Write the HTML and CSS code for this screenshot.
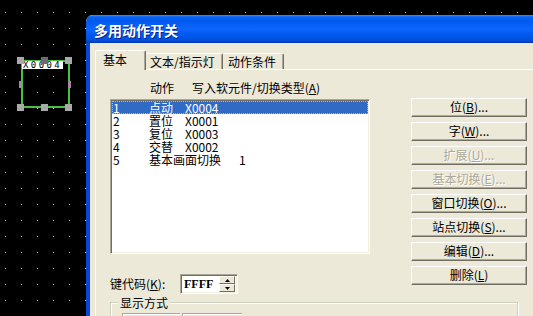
FILE: index.html
```html
<!DOCTYPE html>
<html lang="zh-CN">
<head>
  <meta charset="UTF-8" />
  <title>多用动作开关</title>
  <link rel="stylesheet" href="styles.css">
</head>
<body>
  <div class="desk">
    <!-- Editor grid -->
    <svg class="grid" width="533" height="316">
      <defs>
        <pattern id="dots" x="5" y="12" width="16" height="16" patternUnits="userSpaceOnUse">
          <rect width="1" height="1" fill="#d8d8d8" />
        </pattern>
      </defs>
      <rect width="533" height="316" fill="url(#dots)" />
    </svg>

    <!-- Selected switch on the screen -->
    <div class="part">
      <div class="part-frame">
        <span class="part-label">X0004</span>
      </div>
      <span class="handle h-tl"></span>
      <span class="handle h-tm"></span>
      <span class="handle h-tr"></span>
      <span class="handle h-ml"></span>
      <span class="handle h-mr"></span>
      <span class="handle h-bl"></span>
      <span class="handle h-bm"></span>
      <span class="handle h-br"></span>
    </div>

    <!-- Dialog window -->
    <div class="dialog">
      <div class="titlebar">多用动作开关</div>
      <div class="dlg-body">
        <div class="tabs">
          <div class="tab tab-basic active">基本</div>
          <div class="tab tab-text">文本/指示灯</div>
          <div class="tab tab-cond">动作条件</div>
        </div>

        <div class="panel">
          <div class="main-row">
            <div class="left-col">
              <div class="list-head">
                <span class="head-action">动作</span>
                <span>写入软元件/切换类型(<u>A</u>)</span>
              </div>

              <div class="listbox">
                <div class="row selected"><span class="num">1</span><span>点动</span><span class="val">X0004</span></div>
                <div class="row"><span class="num">2</span><span>置位</span><span class="val">X0001</span></div>
                <div class="row"><span class="num">3</span><span>复位</span><span class="val">X0003</span></div>
                <div class="row"><span class="num">4</span><span>交替</span><span class="val">X0002</span></div>
                <div class="row"><span class="num">5</span><span>基本画面切换</span><span class="val wide">1</span></div>
              </div>

              <div class="keycode">
                <span class="keycode-label">键代码(<u>K</u>):</span>
                <div class="spin-input">
                  <span class="spin-text">FFFF</span>
                  <div class="spin-btns">
                    <span class="spin-btn"><svg width="5" height="3"><path d="M2.5 0 L5 3 L0 3 Z" fill="#000"/></svg></span>
                    <span class="spin-btn"><svg width="5" height="3"><path d="M0 0 L5 0 L2.5 3 Z" fill="#000"/></svg></span>
                  </div>
                </div>
              </div>
            </div>

            <div class="buttons">
              <div class="btn">位(<u>B</u>)...</div>
              <div class="btn">字(<u>W</u>)...</div>
              <div class="btn disabled">扩展(<u>U</u>)...</div>
              <div class="btn disabled">基本切换(<u>E</u>)...</div>
              <div class="btn">窗口切换(<u>O</u>)...</div>
              <div class="btn">站点切换(<u>S</u>)...</div>
              <div class="btn">编辑(<u>D</u>)...</div>
              <div class="btn">删除(<u>L</u>)</div>
            </div>
          </div>

          <div class="group">
            <span class="group-title">显示方式</span>
            <div class="group-row">
              <span class="group-box"></span>
              <span class="group-box second"></span>
            </div>
          </div>
        </div>
      </div>
    </div>
  </div>
</body>
</html>
```

FILE: styles.css
```css
body {
  margin: 0;
  background: #000;
  font-family: "Noto Sans CJK SC", "Noto Sans", sans-serif;
  font-size: 12px;
  color: #000;
}
u {
  text-decoration: underline;
  text-underline-offset: 1px;
}
.desk {
  position: relative;
  width: 533px;
  height: 316px;
  overflow: hidden;
  background: #000;
}
.grid {
  position: absolute;
  left: 0;
  top: 0;
}

/* Selected part on the canvas */
.part {
  position: absolute;
  left: 17px;
  top: 57px;
  width: 56px;
  height: 55px;
}
.part-frame {
  margin: 3px 0 0 4px;
  width: 45px;
  height: 44px;
  border: 2px solid #46c046;
}
.part-label {
  display: block;
  width: 40px;
  height: 8px;
  margin: -1px 0 0 -1px;
  background: #fff;
  font-family: "DejaVu Sans Mono", monospace;
  font-size: 9px;
  line-height: 8px;
  letter-spacing: 2.4px;
  color: #000;
  padding-left: 1px;
}
.handle {
  position: absolute;
  width: 7px;
  height: 7px;
  background: #a9a9a9;
}
.h-tl { left: 0; top: 0; }
.h-tm { left: 24px; top: 0; background: #6b6b6b; }
.h-tr { left: 48px; top: 0; }
.h-ml { left: 2px; top: 24px; width: 3px; background: #b080b0; }
.h-mr { left: 51px; top: 24px; width: 3px; background: #b080b0; }
.h-bl { left: 0; top: 47px; }
.h-bm { left: 24px; top: 47px; }
.h-br { left: 48px; top: 47px; }

/* Dialog window */
.dialog {
  position: absolute;
  left: 86px;
  top: 15px;
  width: 470px;
  height: 320px;
  background: #ece9d8;
  border-radius: 7px 7px 0 0;
  overflow: hidden;
}
.titlebar {
  height: 28px;
  padding-left: 8px;
  line-height: 30px;
  font-size: 14px;
  font-weight: bold;
  color: #fff;
  text-shadow: 1px 1px 0 #0a1e8c;
  background: linear-gradient(#3b8cff 0, #0a63f2 2px, #0058ee 6px, #0d66ff 14px, #0058ec 20px, #0050e0 25px, #0040c0 27px, #0033a8 28px);
}
.dlg-body {
  height: 292px;
  border-left: 4px solid #0846d8;
  padding: 7px 0 0 5px;
}

/* Tabs */
.tabs {
  display: flex;
  align-items: flex-end;
  height: 19px;
  position: relative;
  z-index: 1;
}
.tab {
  box-sizing: border-box;
  height: 16px;
  line-height: 15px;
  border-top: 1px solid #fff;
  border-left: 1px solid #fff;
  border-right: 1px solid #716f64;
  box-shadow: inset -1px 0 0 #aca899;
  border-radius: 2px 2px 0 0;
  background: #ece9d8;
  white-space: nowrap;
}
.tab.active {
  height: 20px;
  margin-bottom: -1px;
  line-height: 17px;
}
.tab-basic { width: 51px; padding-left: 7px; }
.tab-text { width: 77px; padding-left: 4px; border-left: none; }
.tab-cond { width: 61px; padding-left: 5px; border-left: none; }

.panel {
  height: 260px;
  border-top: 1px solid #fff;
  border-left: 1px solid #fff;
  padding: 11px 0 0 14px;
}
.main-row {
  display: flex;
  gap: 41px;
}
.left-col {
  width: 260px;
}
.list-head {
  line-height: 14px;
  padding-left: 40px;
  display: flex;
  gap: 18px;
}

/* List of actions */
.listbox {
  box-sizing: border-box;
  margin-top: 4px;
  height: 155px;
  background: #fff;
  border-top: 1px solid #aca899;
  border-left: 1px solid #aca899;
  border-right: 1px solid #fff;
  border-bottom: 1px solid #fff;
  box-shadow: inset 1px 1px 0 #716f64, inset -1px -1px 0 #f1efe2;
  padding: 1px 1px 0 1px;
}
.row {
  height: 13px;
  line-height: 13px;
  display: flex;
  white-space: nowrap;
}
.row .num {
  width: 36px;
  padding-left: 1px;
}
.row .val {
  margin-left: 12px;
}
.row .val.wide {
  margin-left: 18px;
}
.row.selected {
  background: #316ac5;
  color: #fff;
  outline: 1px dotted #a9b8d8;
  outline-offset: -1px;
}

/* Key code */
.keycode {
  margin-top: 20px;
  display: flex;
  align-items: center;
}
.keycode-label {
  width: 70px;
  line-height: 14px;
}
.spin-input {
  box-sizing: border-box;
  width: 58px;
  height: 20px;
  background: #fff;
  border-top: 1px solid #aca899;
  border-left: 1px solid #aca899;
  border-right: 1px solid #fff;
  border-bottom: 1px solid #fff;
  box-shadow: inset 1px 1px 0 #716f64, inset -1px -1px 0 #f1efe2;
  display: flex;
  align-items: center;
  justify-content: space-between;
  padding: 0 2px 0 3px;
}
.spin-text {
  font-family: "Liberation Serif", serif;
  font-weight: bold;
  font-size: 12px;
  line-height: 14px;
}
.spin-btns {
  display: flex;
  flex-direction: column;
}
.spin-btn {
  box-sizing: border-box;
  width: 16px;
  height: 8px;
  background: #ece9d8;
  border-top: 1px solid #fff;
  border-left: 1px solid #fff;
  border-right: 1px solid #716f64;
  border-bottom: 1px solid #716f64;
  display: flex;
  align-items: center;
  justify-content: center;
}

/* Command buttons */
.buttons {
  margin-top: 17px;
  display: flex;
  flex-direction: column;
  gap: 5px;
}
.btn {
  box-sizing: border-box;
  width: 116px;
  height: 19px;
  line-height: 16px;
  text-align: center;
  border-top: 1px solid #fff;
  border-left: 1px solid #fff;
  border-right: 1px solid #716f64;
  border-bottom: 1px solid #716f64;
  box-shadow: inset -1px -1px 0 #aca899;
  white-space: nowrap;
}
.btn.disabled {
  color: #aca899;
  text-shadow: 1px 1px 0 #fff;
}

/* Display group */
.group {
  box-sizing: border-box;
  width: 408px;
  margin-top: 8px;
  height: 40px;
  border: 1px solid #d0d0bf;
  box-shadow: inset 1px 1px 0 #fff, 1px 1px 0 #fff;
  padding: 0 0 0 7px;
}
.group-title {
  display: block;
  width: fit-content;
  margin-top: -7px;
  padding: 0 2px;
  line-height: 14px;
  background: #ece9d8;
}
.group-row {
  display: flex;
  gap: 2px;
  margin-top: 3px;
  padding-left: 4px;
}
.group-box {
  box-sizing: border-box;
  width: 58px;
  height: 16px;
  border-top: 1px solid #aca899;
  border-left: 1px solid #aca899;
  box-shadow: inset 1px 1px 0 #fff;
}
.group-box.second {
  width: 60px;
}
```
